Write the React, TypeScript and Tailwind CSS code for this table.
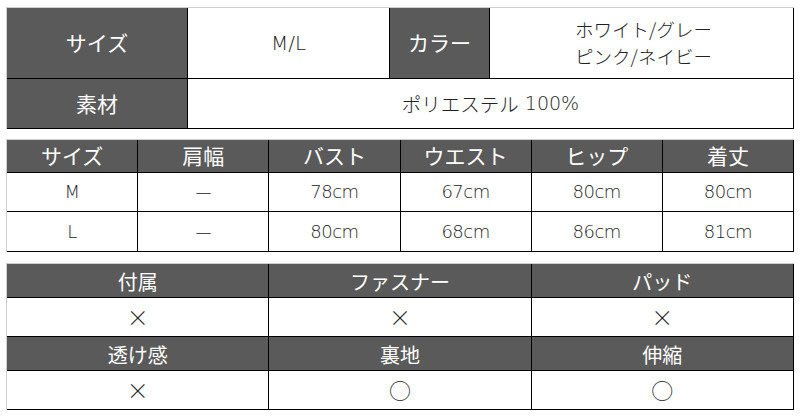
import React from "react";

const font = { fontFamily: '"Noto Sans CJK JP", "Noto Sans", sans-serif' };
const thin = { fontFamily: '"DejaVu Sans", "Noto Sans CJK JP", sans-serif', fontWeight: 200 };
const thinJp = { fontFamily: '"Noto Sans CJK JP", sans-serif', fontWeight: 300 };

const dark = "bg-[#5a5a5a] text-white";
const cellB = "border-r border-b border-black flex items-center justify-center";

export default function App() {
  const sizes = [
    ["M", "—", "78cm", "67cm", "80cm", "80cm"],
    ["L", "—", "80cm", "68cm", "86cm", "81cm"],
  ];
  const heads2 = ["サイズ", "肩幅", "バスト", "ウエスト", "ヒップ", "着丈"];
  return (
    <div className="w-[800px] h-[420px] bg-white overflow-hidden" style={font}>
      <div className="pt-[7px] pl-[6px]">
        {/* Table 1 */}
        <div className="w-[788px] border-t border-l border-[#cfcfcf] flex flex-col">
          <div className="flex h-[71px]">
            <div className={`${cellB} ${dark} w-[181px] text-[21px]`}>サイズ</div>
            <div className={`${cellB} w-[202px] text-[20px] text-[#222]`} style={thin}>M/L</div>
            <div className={`${cellB} ${dark} w-[100px] text-[21px]`}>カラー</div>
            <div className={`${cellB} flex-1 text-[18.5px] text-[#222] leading-[27px]`} style={thinJp}>
              <div className="text-left pl-[4px]">
                <div>ホワイト/グレー</div>
                <div>ピンク/ネイビー</div>
              </div>
            </div>
          </div>
          <div className="flex h-[50px]">
            <div className={`${cellB} ${dark} w-[181px] text-[21px]`}>素材</div>
            <div className={`${cellB} flex-1 text-[19.5px] text-[#222]`} style={thinJp}>
              ポリエステル<span style={thin} className="ml-[6px] text-[19px]">100%</span>
            </div>
          </div>
        </div>

        {/* Table 2 */}
        <div className="mt-[10px] w-[788px] border-t border-l border-[#cfcfcf] flex flex-col">
          <div className="grid grid-cols-6 h-[32px]">
            {heads2.map((h, i) => (
              <div key={i} className={`${cellB} ${dark} text-[21px]`}>{h}</div>
            ))}
          </div>
          {sizes.map((r, ri) => (
            <div key={ri} className="grid grid-cols-6 h-[40px]">
              {r.map((c, ci) => (
                <div key={ci} className={`${cellB} text-[18px] text-[#222] tracking-[-0.5px]`} style={ci === 1 ? thinJp : thin}>{c}</div>
              ))}
            </div>
          ))}
        </div>

        {/* Table 3 */}
        <div className="mt-[11px] w-[788px] border-t border-l border-[#cfcfcf] flex flex-col">
          <div className="grid grid-cols-3 h-[33px]">
            {["付属", "ファスナー", "パッド"].map((h) => (
              <div key={h} className={`${cellB} ${dark} text-[20px] pt-[3px]`}>{h}</div>
            ))}
          </div>
          <div className="grid grid-cols-3 h-[40px]">
            {["×", "×", "×"].map((c, i) => (
              <div key={i} className={`${cellB} text-[22px] text-[#222]`} style={thinJp}>{c}</div>
            ))}
          </div>
          <div className="grid grid-cols-3 h-[33px]">
            {["透け感", "裏地", "伸縮"].map((h) => (
              <div key={h} className={`${cellB} ${dark} text-[20px] pt-[3px]`}>{h}</div>
            ))}
          </div>
          <div className="grid grid-cols-3 h-[40px]">
            {["×", "○", "○"].map((c, i) => (
              <div key={i} className={`${cellB} text-[22px] text-[#222]`} style={thinJp}>{c}</div>
            ))}
          </div>
        </div>
      </div>
    </div>
  );
}
